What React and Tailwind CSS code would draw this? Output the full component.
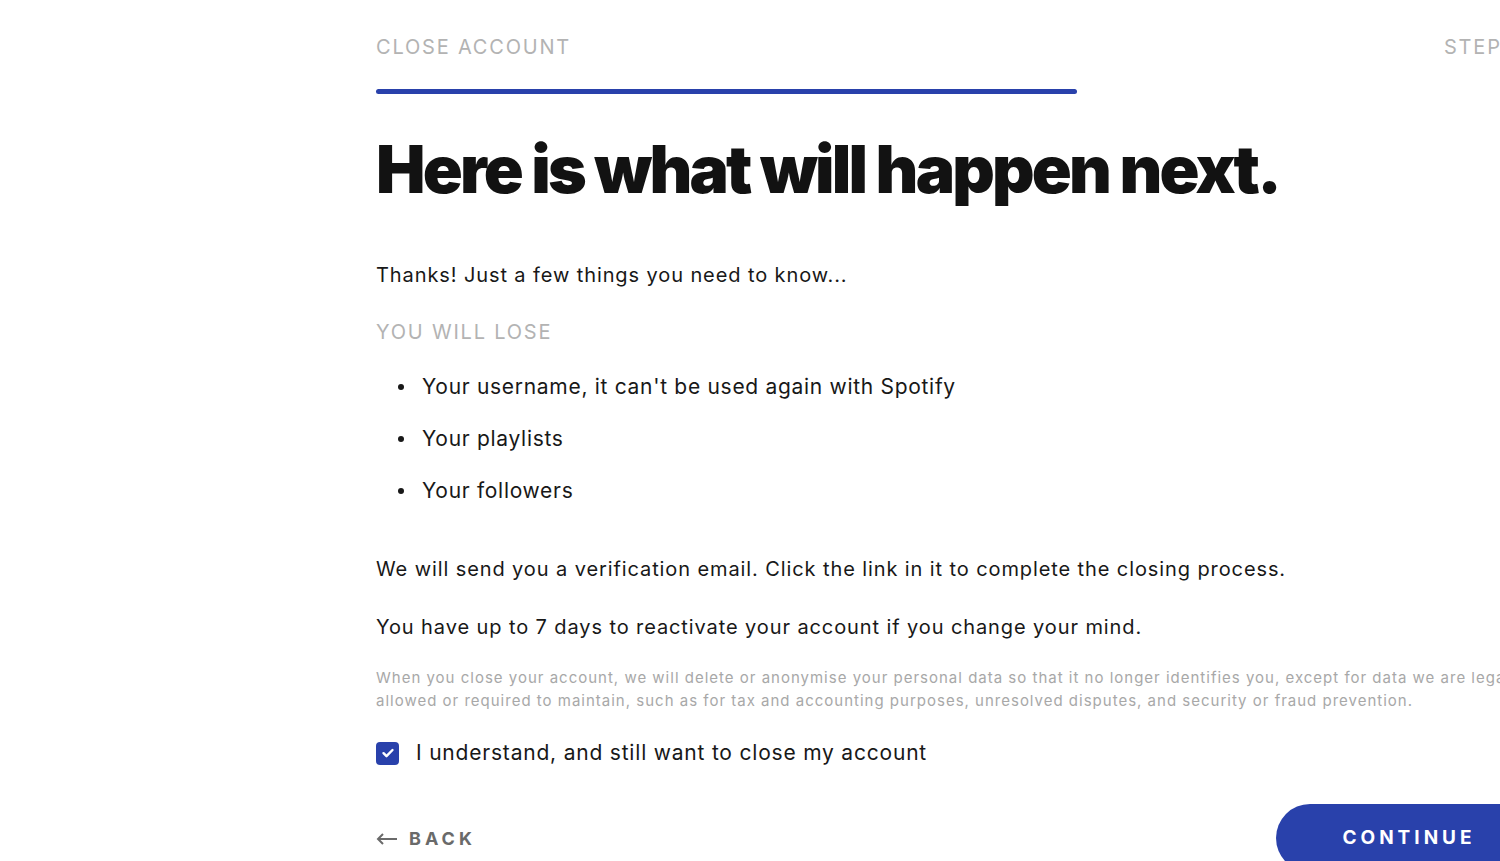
import React, { useState } from 'react';

const font = { fontFamily: 'Inter, "Noto Sans", sans-serif' };

const App = () => {
  const [checked, setChecked] = useState(true);

  const bullets = [
    "Your username, it can't be used again with Spotify",
    'Your playlists',
    'Your followers',
  ];

  return (
    <div className="w-[1500px] h-[861px] overflow-hidden bg-white" style={font}>
      <div className="ml-[376px] w-[1207px] pt-[35px]">
        {/* header */}
        <div className="flex justify-between items-center text-[20px] leading-[24px] tracking-[1.8px] text-[#b3b3b3] uppercase">
          <span>Close account</span>
          <span>Step 3 of 3</span>
        </div>
        <div className="mt-[30px] w-[701px] h-[5px] rounded-full bg-[#2941ab]" />

        <h1 className="mt-[35px] text-[66px] leading-[80px] font-black tracking-[-2.8px] text-[#121212]">
          Here is what will happen next.
        </h1>

        <p className="mt-[53px] text-[20px] leading-[26px] tracking-[0.9px] text-[#181818]">
          Thanks! Just a few things you need to know...
        </p>

        <p className="mt-[31px] text-[20px] leading-[26px] tracking-[1.8px] text-[#b3b3b3] uppercase">You will lose</p>

        <ul className="mt-[29px] flex flex-col gap-[26px] text-[21px] leading-[26px] tracking-[0.7px] text-[#181818]">
          {bullets.map((b) => (
            <li key={b} className="flex items-center">
              <span className="ml-[22px] mr-[18px] w-[6px] h-[6px] rounded-full bg-[#181818]" />
              {b}
            </li>
          ))}
        </ul>

        <p className="mt-[52px] text-[20px] leading-[26px] tracking-[0.9px] text-[#181818]">
          We will send you a verification email. Click the link in it to complete the closing process.
        </p>
        <p className="mt-[32px] text-[20px] leading-[26px] tracking-[0.9px] text-[#181818]">
          You have up to 7 days to reactivate your account if you change your mind.
        </p>

        <p className="mt-[26px] text-[15px] leading-[23px] tracking-[1px] text-[#a8a8a8]">
          When you close your account, we will delete or anonymise your personal data so that it no longer identifies you, except for data we are legally allowed or required to maintain, such as for tax and accounting purposes, unresolved disputes, and security or fraud prevention.
        </p>

        <label className="mt-[28px] flex items-center gap-[17px] cursor-pointer">
          <button
            type="button"
            onClick={() => setChecked(!checked)}
            className={`w-[23px] h-[23px] rounded-[4px] flex items-center justify-center ${checked ? 'bg-[#2941ab]' : 'border-2 border-[#b3b3b3] bg-white'}`}
          >
            {checked && (
              <svg width="14" height="14" viewBox="0 0 14 14" fill="none">
                <path d="M2.5 7.2l3 3 6-6.2" stroke="white" strokeWidth="2.4" strokeLinecap="round" strokeLinejoin="round" />
              </svg>
            )}
          </button>
          <span className="text-[21px] leading-[26px] tracking-[0.8px] text-[#181818]">
            I understand, and still want to close my account
          </span>
        </label>

        <div className="mt-[38px] flex justify-between items-start">
          <button className="mt-[21px] flex items-center gap-[11px] text-[#6a6a6a] text-[18px] font-bold tracking-[4px] uppercase">
            <svg width="22" height="12" viewBox="0 0 22 12" fill="none">
              <path d="M21 6H2M7 1L2 6l5 5" stroke="#6a6a6a" strokeWidth="2" />
            </svg>
            Back
          </button>
          <button className="mr-[41px] w-[266px] h-[68px] rounded-full bg-[#2941ab] text-white text-[19px] font-bold tracking-[4px] uppercase flex items-center justify-center">
            Continue
          </button>
        </div>
      </div>
    </div>
  );
};

export default App;
